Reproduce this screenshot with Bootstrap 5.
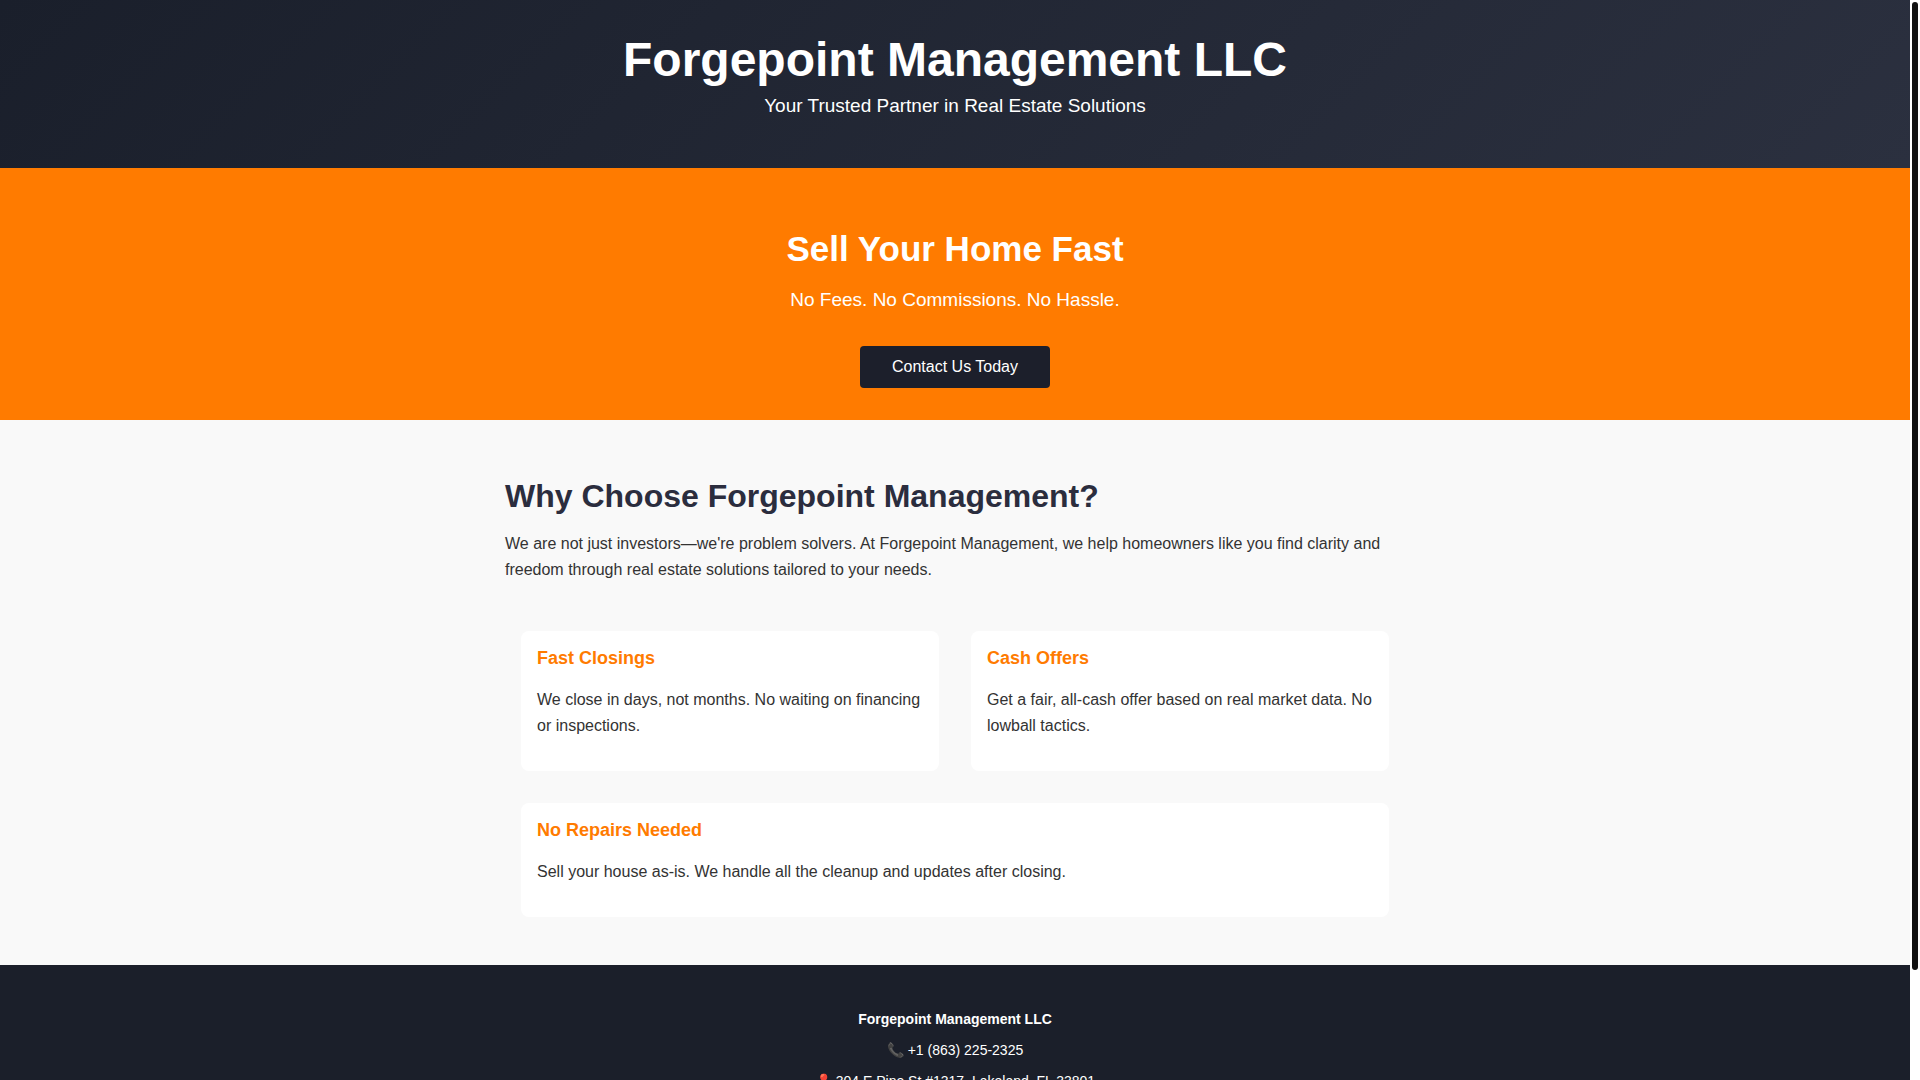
<!DOCTYPE html>
<html lang="en">
<head>
<meta charset="utf-8">
<meta name="viewport" content="width=device-width, initial-scale=1">
<title>Forgepoint Management LLC</title>
<link href="https://cdn.jsdelivr.net/npm/bootstrap@5.3.0/dist/css/bootstrap.min.css" rel="stylesheet">
<style>
  body { font-family: "Liberation Sans", Arial, sans-serif; line-height: 26px; color: #333; background: #f9f9f9; }
  .page-scroll { overflow-y: auto; scrollbar-width: none; }
  .page-scroll::-webkit-scrollbar { display: none; }
  .rail { width: 10px; padding: 2px; background: #fff; }
  .rail-thumb { height: 90%; background: #111; border-radius: 4px; }
  .site-header { background: linear-gradient(135deg, #1a1f2b, #2b303f); padding: 32px; }
  .site-header h1 { font-size: 48px; line-height: 56px; }
  .tagline { font-size: 19px; line-height: 28px; }
  .hero { background: #ff7b00; padding: 60px 32px 32px; }
  .hero h2 { font-size: 35px; line-height: 42px; }
  .hero .btn { --bs-btn-color: #fff; --bs-btn-bg: #1c1f2b; --bs-btn-hover-color: #fff; --bs-btn-hover-bg: #2b303f; --bs-btn-padding-x: 32px; --bs-btn-padding-y: 8px; --bs-btn-border-width: 0; --bs-btn-border-radius: 4px; --bs-btn-line-height: 26px; }
  .why { max-width: 924px; padding-top: 57px; padding-bottom: 48px; }
  .why h2 { font-size: 32px; line-height: 38px; color: #2b2d3e; }
  .features { gap: 32px; }
  .features .row { --bs-gutter-x: 32px; }
  .feature { background: #fff; border-radius: 8px; }
  .feature h3 { font-size: 18px; line-height: 22px; color: #ff7b00; margin-bottom: 18px; }
  .site-footer { background: #1b1f2a; color: #fff; font-size: 14px; line-height: 23px; padding: 43px 32px 80px; }
</style>
<script src="https://cdn.jsdelivr.net/npm/bootstrap@5.3.0/dist/js/bootstrap.bundle.min.js" defer></script>
</head>
<body class="d-flex vh-100">
<div class="page-scroll flex-fill">
  <header class="site-header text-white text-center">
    <h1 class="fw-bold mb-1">Forgepoint Management LLC</h1>
    <p class="tagline mb-3">Your Trusted Partner in Real Estate Solutions</p>
  </header>
  <section class="hero text-white text-center">
    <h2 class="fw-bold mb-3">Sell Your Home Fast</h2>
    <p class="tagline mb-4 pb-2">No Fees. No Commissions. No Hassle.</p>
    <a class="btn" href="#contact">Contact Us Today</a>
  </section>
  <main class="why container">
    <h2 class="fw-bold mb-3">Why Choose Forgepoint Management?</h2>
    <p class="mb-5">We are not just investors—we're problem solvers. At Forgepoint Management, we help homeowners like you find clarity and freedom through real estate solutions tailored to your needs.</p>
    <div class="features d-flex flex-column px-3">
      <div class="row">
        <div class="col-6"><div class="feature p-3"><h3 class="fw-bold">Fast Closings</h3><p>We close in days, not months. No waiting on financing or inspections.</p></div></div>
        <div class="col-6"><div class="feature p-3"><h3 class="fw-bold">Cash Offers</h3><p>Get a fair, all-cash offer based on real market data. No lowball tactics.</p></div></div>
      </div>
      <div class="feature p-3"><h3 class="fw-bold">No Repairs Needed</h3><p>Sell your house as-is. We handle all the cleanup and updates after closing.</p></div>
    </div>
  </main>
  <footer class="site-footer text-center" id="contact">
    <p class="mb-2"><strong>Forgepoint Management LLC</strong></p>
    <p class="mb-2">📞 +1 (863) 225-2325</p>
    <p class="mb-2">📍 304 E Pine St #1317, Lakeland, FL 33801</p>
  </footer>
</div>
<div class="rail flex-shrink-0" aria-hidden="true"><div class="rail-thumb"></div></div>
</body>
</html>
